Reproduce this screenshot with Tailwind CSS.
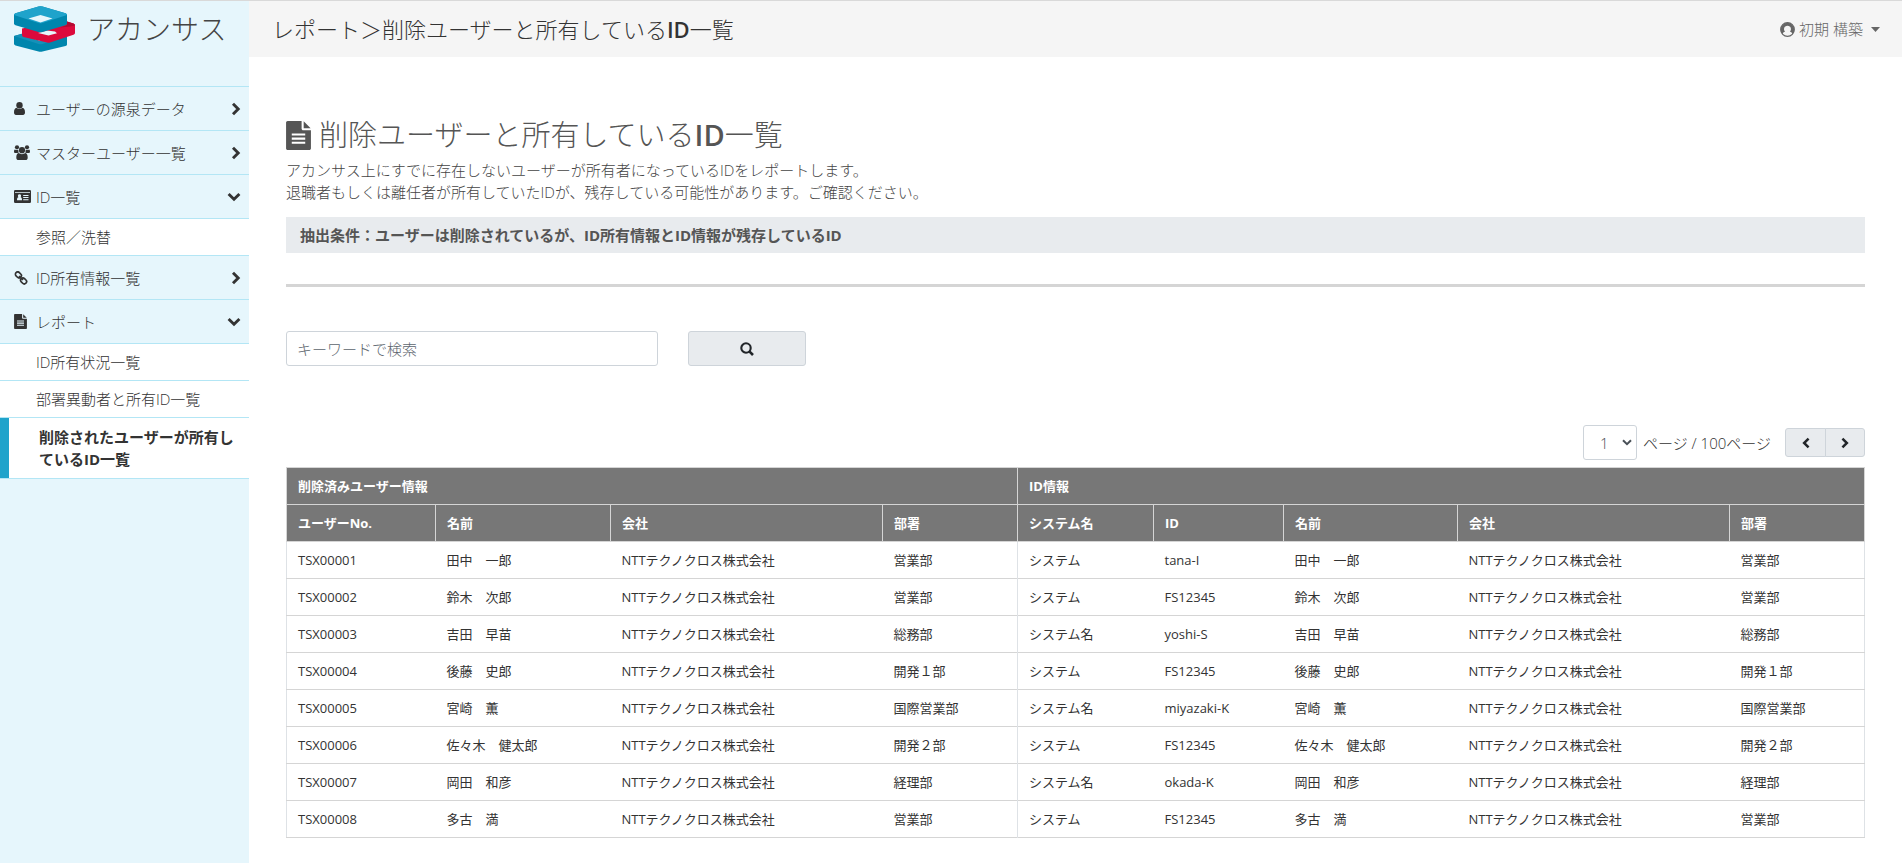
<!DOCTYPE html>
<html lang="ja">
<head>
  <meta charset="UTF-8" />
  <meta name="viewport" content="width=device-width, initial-scale=1.0" />
  <title>削除ユーザーと所有しているID一覧</title>
  <script src="https://cdn.jsdelivr.net/npm/@tailwindcss/browser@4"></script>
</head>
<body class="min-h-screen flex border-t border-[#d9d9d9] bg-white text-[#333] text-[15px] leading-[22px] font-light font-['Open_Sans','Noto_Sans_CJK_JP',sans-serif]">

<svg class="hidden">
  <symbol id="right" viewBox="0 0 10 14"><path d="M2 1.8 7.2 7 2 12.2" fill="none" stroke="currentColor" stroke-width="2.9"/></symbol>
  <symbol id="left" viewBox="0 0 10 14"><path d="M8 1.8 2.8 7 8 12.2" fill="none" stroke="currentColor" stroke-width="2.9"/></symbol>
  <symbol id="down" viewBox="0 0 14 10"><path d="M1.6 2 7 7.2 12.4 2" fill="none" stroke="currentColor" stroke-width="2.9"/></symbol>
  <symbol id="file" viewBox="0 0 24 28"><path fill="currentColor" d="M15 0v7.500c0 .8.7 1.500 1.500 1.500H24v17.500c0 .8-.7 1.500-1.500 1.500h-21C.7 28 0 27.300 0 26.500v-25C0 .7.7 0 1.500 0zM17 .3 23.700 7H17zM5.500 12v2h13v-2zm0 4v2h13v-2zm0 4v2h13v-2z" fill-rule="evenodd"/></symbol>
</svg>

<!-- Sidebar -->
<aside class="w-[249px] shrink-0 bg-[#e6f6fc]">
  <a href="#" class="flex items-center h-[85px] pl-3.5 pb-[29px]" aria-label="アカンサス">
    <svg class="w-[61px] h-[46px]" viewBox="0 0 61 46">
      <path d="M0 30 26.500 23 53 30V38.500Q53 39.500 51.500 40L28.500 45.600Q26.500 46 24.500 45.600L1.500 39.500Q0 39 0 37.500z" fill="#0086ad"/>
      <path d="M0 30 12 26.500 26.500 32 41 28 53 30 28.500 38Q26.500 38.500 24.500 38z" fill="#1591b8"/>
      <path d="M15 31 20 29.500 34 33 26.500 35z" fill="#e6f6fc"/>
      <path d="M8 22.500 34 17 53 15.500 59.500 17.500Q61 18.200 61 19.500V27Q61 28.200 59.500 28.700L36 36.500Q34.500 37 33 36.500L9.500 31Q8 30.500 8 29z" fill="#dc0a3c"/>
      <path d="M53 15.500 59.500 17.500Q61 18.200 61 19.500L56 20.500 46 21.500 53 19z" fill="#b40a32"/>
      <path d="M24 27 33 24.500 41 25.500 43 27.300 34.500 29.500z" fill="#e6f6fc"/>
      <path d="M0 9Q0 7.800 1.500 7.300L24.500.5Q26.500 0 28.500.5L51.500 7.300Q53 7.800 53 9V17.500Q53 18.700 51.500 19.200L28.500 26Q26.500 26.500 24.500 26L1.500 19.200Q0 18.700 0 17.500z" fill="#0086ad"/>
      <path d="M0 9Q0 7.800 1.500 7.300L24.500.5Q26.500 0 28.500.5L51.500 7.300Q53 7.800 53 9L28.500 17Q26.500 17.500 24.500 17z" fill="#1fa3cb"/>
      <path d="M14.500 12.500 26.500 9 38.500 12.500 26.500 16.500z" fill="#e6f6fc"/>
    </svg>
    <span class="ml-3 text-[28px] leading-none text-[#444]">アカンサス</span>
  </a>

  <nav class="border-b border-[#b3e6f5]">
    <a href="#" class="flex items-center h-11 pl-3.5 pr-2 border-t border-[#b3e6f5]">
      <svg class="w-[11px] h-[13px] mr-[11px]" viewBox="0 0 11 13" fill="currentColor"><circle cx="5.500" cy="3.200" r="3.200"/><path d="M2.500 5.800c-1.600.3-2.500 2-2.500 4.700C0 12 .8 13 2 13h7c1.200 0 2-1 2-2.500 0-2.700-.9-4.400-2.500-4.700C7.300 7.200 3.700 7.200 2.500 5.800z"/></svg>
      <span class="flex-1">ユーザーの源泉データ</span>
      <svg class="w-2.5 h-3.5"><use href="#right"/></svg>
    </a>
    <a href="#" class="flex items-center h-11 pl-3.5 pr-2 border-t border-[#b3e6f5]">
      <svg class="w-4 h-[15px] mr-1.5" viewBox="0 0 16 15" fill="currentColor"><circle cx="3" cy="2.300" r="2.100"/><circle cx="13" cy="2.300" r="2.100"/><circle cx="8" cy="5.200" r="3.100"/><path d="M1 4.500C.2 4.700 0 5.600 0 6.800 0 7.700.6 8 1.300 8h2.200C4 7.600 4.300 7.500 4.800 7.400 4.300 6.500 4.200 5.700 4.300 4.800 3.200 5.200 2 5.200 1 4.500zM15 4.500c.8.2 1 1.100 1 2.300 0 .9-.6 1.200-1.300 1.200h-2.200c-.5-.4-.8-.5-1.300-.6.500-.9.6-1.700.5-2.600 1.100.4 2.300.4 3.300-.3zM4.600 8.100C3 8.400 2.300 10.100 2.300 12.700 2.300 14.200 3.200 15 4.500 15h7c1.300 0 2.200-.8 2.200-2.300 0-2.600-.7-4.300-2.300-4.600-1.900 1.400-4.900 1.400-6.800 0z"/></svg>
      <span class="flex-1">マスターユーザー一覧</span>
      <svg class="w-2.5 h-3.5"><use href="#right"/></svg>
    </a>
    <a href="#" class="flex items-center h-11 pl-3.5 pr-2 border-t border-[#b3e6f5]">
      <svg class="w-[17px] h-[13px] mr-[5px]" viewBox="0 0 17 13"><path fill="currentColor" fill-rule="evenodd" d="M1.200 0h14.600Q17 0 17 1.200v10.600Q17 13 15.800 13H1.200Q0 13 0 11.800V1.200Q0 0 1.200 0zM1 2v.8h15V2zM3 10.200h5c0-1.900-.4-2.800-1.400-3 .9-1 .6-2.900-1.100-2.900S3.500 6.200 4.400 7.200c-1 .2-1.400 1.100-1.400 3zM9.200 5v1h5.300V5zm0 2.100v1h5.300v-1zm0 2.100v1h5.300v-1z"/></svg>
      <span class="flex-1">ID一覧</span>
      <svg class="w-3.5 h-2.5"><use href="#down"/></svg>
    </a>
    <a href="#" class="block py-[7px] pl-9 bg-white border-t border-[#b3e6f5]">参照／洗替</a>
    <a href="#" class="flex items-center h-11 pl-3.5 pr-2 border-t border-[#b3e6f5]">
      <svg class="w-3.5 h-3.5 mr-2" viewBox="0 0 14 14" fill="none" stroke="currentColor" stroke-width="1.700"><rect x="1.200" y="1.600" width="6.400" height="4.600" rx="2.200" transform="rotate(45 4.400 3.900)"/><rect x="6.400" y="7.600" width="6.400" height="4.600" rx="2.200" transform="rotate(45 9.600 9.900)"/><path d="M5 5 9 9"/></svg>
      <span class="flex-1">ID所有情報一覧</span>
      <svg class="w-2.5 h-3.5"><use href="#right"/></svg>
    </a>
    <a href="#" class="flex items-center h-11 pl-3.5 pr-2 border-t border-[#b3e6f5]">
      <svg class="w-[13px] h-[15px] mr-[9px]"><use href="#file"/></svg>
      <span class="flex-1">レポート</span>
      <svg class="w-3.5 h-2.5"><use href="#down"/></svg>
    </a>
    <a href="#" class="block py-[7px] pl-9 bg-white border-t border-[#b3e6f5]">ID所有状況一覧</a>
    <a href="#" class="block py-[7px] pl-9 bg-white border-t border-[#b3e6f5]">部署異動者と所有ID一覧</a>
    <div class="bg-white border-t border-[#b3e6f5]">
      <a href="#" class="block py-2 pl-[30px] pr-3 border-l-9 border-[#1fa3cb] font-bold">削除されたユーザーが所有しているID一覧</a>
    </div>
  </nav>
</aside>

<div class="flex-1 min-w-0">
  <!-- Header -->
  <header class="flex items-center justify-between h-14 pl-[23px] pr-[22px] bg-[#f5f5f5]">
    <h1 class="text-[22px] leading-8">レポート＞削除ユーザーと所有している<span class="font-semibold">ID</span>一覧</h1>
    <button class="flex items-center text-[#666]">
      <svg class="w-[15px] h-[15px] mr-1" viewBox="0 0 15 15"><circle cx="7.500" cy="7.500" r="6.800" fill="none" stroke="currentColor" stroke-width="1.200"/><path d="M2.500 12.300C1 10.500.8 9 .8 7.500a6.700 6.700 0 0 1 13.400 0c0 1.500-.2 3-1.700 4.800-.3-1.800-1.200-2.300-2.500-2.600 1.800-2 1.200-5.900-2.500-5.900S3.200 7.700 5 9.700c-1.300.3-2.200.8-2.500 2.600z" fill="currentColor"/></svg>
      初期 構築
      <svg class="w-[9px] h-[5px] ml-2" viewBox="0 0 9 5"><path d="M0 0h9L4.500 5z" fill="currentColor"/></svg>
    </button>
  </header>

  <main class="px-[37px] pt-[57px]">
    <section class="text-[#555]">
      <h2 class="flex items-center gap-2 text-[29px] leading-[42px]">
        <svg class="w-[25px] h-[29px]"><use href="#file"/></svg>
        <span>削除ユーザーと所有している<span class="font-semibold">ID</span>一覧</span>
      </h2>
      <p class="mt-[3px] text-[#444]">アカンサス上にすでに存在しないユーザーが所有者になっているIDをレポートします。<br>退職者もしくは離任者が所有していたIDが、残存している可能性があります。ご確認ください。</p>
      <p class="mt-3.5 px-3.5 py-[7px] bg-[#e8ebee] font-bold">抽出条件：ユーザーは削除されているが、ID所有情報とID情報が残存しているID</p>
    </section>

    <hr class="mt-[31px] border-t-3 border-[#d5d5d5]">

    <form class="flex gap-[30px] mt-11">
      <input type="text" aria-label="キーワードで検索" placeholder="キーワードで検索" class="w-[372px] h-[35px] px-2.5 border border-[#ced4da] rounded-[3px] placeholder:text-[#5c656d]">
      <button type="button" aria-label="検索" class="flex items-center justify-center w-[118px] h-[35px] bg-[#e8ebee] border border-[#ced4da] rounded-[3px] text-[#212529]">
        <svg class="w-3.5 h-3.5" viewBox="0 0 14 14" fill="none" stroke="currentColor" stroke-width="2.100"><circle cx="6" cy="6" r="4.700"/><path d="M9.300 9.300 13 13" stroke-width="2.600"/></svg>
      </button>
    </form>

    <div class="flex items-center justify-end mt-[59px] mb-[7px]">
      <label class="flex items-center">
        <span class="relative mr-1.5">
          <select class="appearance-none w-[54px] h-[35px] pl-4 text-[#495057] bg-white border border-[#ced4da] rounded-[3px]">
            <option>1</option>
            <option>2</option>
          </select>
          <svg class="absolute right-[5px] top-3.5 w-2.5 h-[7px] pointer-events-none" viewBox="0 0 10 7"><path d="M1 1.200 5 5.200 9 1.200" fill="none" stroke="#495057" stroke-width="2"/></svg>
        </span>
        ページ / 100ページ
      </label>
      <div class="flex ml-3.5 text-[#212529]">
        <button aria-label="前へ" class="flex items-center justify-center w-[41px] h-[29px] bg-[#e8ebee] border border-[#ced4da] rounded-l-[3px]"><svg class="w-2.5 h-3"><use href="#left"/></svg></button>
        <button aria-label="次へ" class="flex items-center justify-center w-10 h-[29px] -ml-px bg-[#e8ebee] border border-[#ced4da] rounded-r-[3px]"><svg class="w-2.5 h-3"><use href="#right"/></svg></button>
      </div>
    </div>

    <table class="w-full table-fixed border-collapse border border-[#dee2e6] text-left text-[13px] leading-5 font-normal">
      <colgroup>
        <col class="w-[149px]"><col class="w-[175px]"><col class="w-[272px]"><col class="w-[135px]">
        <col class="w-[136px]"><col class="w-[130px]"><col class="w-[174px]"><col class="w-[272px]"><col class="w-[135px]">
      </colgroup>
      <thead class="bg-[#777] text-white">
        <tr>
          <th colspan="4" class="px-[11px] py-2 border border-[#d5d5d5]">削除済みユーザー情報</th>
          <th colspan="5" class="px-[11px] py-2 border border-[#d5d5d5]">ID情報</th>
        </tr>
        <tr id="heads"></tr>
      </thead>
      <tbody id="rows"></tbody>
    </table>
  </main>
</div>

<script>
  const heads = ["ユーザーNo.", "名前", "会社", "部署", "システム名", "ID", "名前", "会社", "部署"];
  const company = "NTTテクノクロス株式会社";
  const users = [
    ["TSX00001", "田中　一郎", "営業部", "システム", "tana-I"],
    ["TSX00002", "鈴木　次郎", "営業部", "システム", "FS12345"],
    ["TSX00003", "吉田　早苗", "総務部", "システム名", "yoshi-S"],
    ["TSX00004", "後藤　史郎", "開発１部", "システム", "FS12345"],
    ["TSX00005", "宮崎　薫", "国際営業部", "システム名", "miyazaki-K"],
    ["TSX00006", "佐々木　健太郎", "開発２部", "システム", "FS12345"],
    ["TSX00007", "岡田　和彦", "経理部", "システム名", "okada-K"],
    ["TSX00008", "多古　満", "営業部", "システム", "FS12345"]
  ];

  document.getElementById('heads').innerHTML = heads.map(h => `<th class="px-[11px] py-2 border border-[#d5d5d5]">${h}</th>`).join('');

  document.getElementById('rows').innerHTML = users.map(([no, name, dept, system, id]) => {
    const cells = [no, name, company, dept, system, id, name, company, dept];
    return '<tr class="border-b border-[#d5d5d5]">' + cells.map((c, i) =>
      `<td class="px-[11px] py-2 ${i === 4 ? 'border-l border-[#dee2e6]' : ''}">${c}</td>`).join('') + '</tr>';
  }).join('');
</script>
</body>
</html>
